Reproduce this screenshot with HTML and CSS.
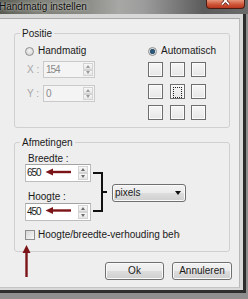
FILE: index.html
```html
<!DOCTYPE html>
<html lang="nl">
<head>
<meta charset="utf-8">
<title>Handmatig instellen</title>
<link rel="stylesheet" href="styles.css">
</head>
<body>
<div class="screen">
  <div class="titlebar">
    <span class="title">Handmatig instellen</span>
    <span class="close">
      <svg width="37" height="8" viewBox="0 0 37 8"><path d="M15 -3 L22 4.5 M22 -3 L15 4.5" stroke="#5a1a10" stroke-width="3.2"/><path d="M15 -3 L22 4.5 M22 -3 L15 4.5" stroke="#ffffff" stroke-width="1.8"/></svg>
    </span>
  </div>
  <div class="window">
    <div class="client">
      <fieldset class="group">
        <legend>Positie</legend>
        <div class="pos-body">
          <div class="pos-manual">
            <div class="radio"><span class="rb"></span><span>Handmatig</span></div>
            <div class="coord">
              <span class="coord-label">X :</span>
              <div class="spin spin-xy"><span class="spin-val">154</span><span class="spin-btns"><span class="sb up"></span><span class="sb down"></span></span></div>
            </div>
            <div class="coord">
              <span class="coord-label">Y :</span>
              <div class="spin spin-xy"><span class="spin-val">0</span><span class="spin-btns"><span class="sb up"></span><span class="sb down"></span></span></div>
            </div>
          </div>
          <div class="pos-auto">
            <div class="radio"><span class="rb rb-on"></span><span>Automatisch</span></div>
            <div class="anchors">
              <span></span><span></span><span></span>
              <span></span><span class="focus"></span><span></span>
              <span></span><span></span><span></span>
            </div>
          </div>
        </div>
      </fieldset>
      <fieldset class="group group-size">
        <legend>Afmetingen</legend>
        <div class="size-body">
          <div class="size-row">
            <div class="fields">
              <div class="field-label">Breedte :</div>
              <div class="spin spin-size"><span class="spin-val">650</span><span class="spin-btns"><span class="sb up"></span><span class="sb down"></span></span></div>
              <div class="field-label label-h">Hoogte :</div>
              <div class="spin spin-size spin-h"><span class="spin-val">450</span><span class="spin-btns"><span class="sb up"></span><span class="sb down"></span></span></div>
            </div>
            <svg class="bracket" width="15" height="42" viewBox="0 0 15 42"><path d="M0 2 H9 V40 H0 M9 21 H14" fill="none" stroke="#111" stroke-width="2"/></svg>
            <div class="combo"><span class="combo-text">pixels</span><span class="caret"></span></div>
          </div>
          <div class="check"><span class="cb"></span><span class="check-text">Hoogte/breedte-verhouding behouden</span></div>
        </div>
      </fieldset>
      <div class="buttons">
        <button class="btn btn-ok">Ok</button>
        <button class="btn btn-cancel">Annuleren</button>
      </div>
    </div>
  </div>
  <svg class="annotations" width="248" height="299" viewBox="0 0 248 299">
    <g fill="#7b1416" stroke="#7b1416">
      <line x1="52" y1="172" x2="71" y2="172" stroke-width="2.4"/>
      <polygon points="45.5,172 53,168.5 53,175.5" stroke="none"/>
      <line x1="52" y1="210.5" x2="71" y2="210.5" stroke-width="2.4"/>
      <polygon points="45.5,210.5 53,207 53,214" stroke="none"/>
      <line x1="26.5" y1="252" x2="26.5" y2="277" stroke-width="2.4"/>
      <polygon points="26.5,245 22.5,253 30.5,253" stroke="none"/>
    </g>
  </svg>
</div>
</body>
</html>
```

FILE: styles.css
```css
* { box-sizing: border-box; }
html, body { margin: 0; padding: 0; }
body {
  font-family: "Liberation Sans", Arial, sans-serif;
  font-size: 10px;
  line-height: 12px;
  color: #1a1a1a;
  background: #8f8f8f;
}
.screen {
  width: 248px;
  height: 299px;
  position: relative;
  overflow: hidden;
  display: flex;
  flex-direction: column;
  background: #8f8f8f;
}
.titlebar {
  height: 14px;
  flex: none;
  display: flex;
  align-items: flex-start;
  background: linear-gradient(to right, #55584e 0%, #7c7e76 14%, #8a8b85 34%, #a7a7a5 48%, #9c9c9c 58%, #777 72%, #5c5c5c 82%, #6c6c6c 100%);
}
.title {
  line-height: 14px;
  margin-left: -1px;
  color: #0f0f0f;
  white-space: nowrap;
  text-shadow: 0 0 4px #c9c9c1, 0 0 2px #b5b5ad;
}
.close {
  margin-left: auto;
  margin-right: 3px;
  width: 39px;
  height: 9px;
  border: 1px solid #4b1b12;
  border-top: 0;
  border-radius: 0 0 4px 4px;
  background: linear-gradient(#e7967c, #cf5538 55%, #b8361e);
}
.close svg { display: block; }
.window {
  width: 246px;
  height: 279px;
  flex: none;
  display: flex;
  flex-direction: column;
  padding: 4px 3px 2px 0;
  background: #d8d8d8;
  border-right: 3px solid #2d2d2d;
  border-bottom: 3px solid #2d2d2d;
}
.client {
  flex: 1;
  background: #eeeeee;
  border-top: 1px solid #a9a9a9;
  border-right: 1px solid #b9b9b9;
  border-bottom: 1px solid #c4c4c4;
}
.group {
  margin: 8px 0 0 14px;
  width: 216px;
  min-width: 0;
  padding: 0;
  border: 1px solid #d0d0d0;
  border-radius: 3px;
}
.group legend {
  margin-left: 5px;
  padding: 0 2px;
  line-height: 13px;
}
.pos-body {
  display: grid;
  grid-template-columns: 123px auto;
  padding: 5px 0 7px 10px;
}
.radio {
  display: flex;
  align-items: center;
  height: 12px;
}
.rb {
  width: 9px;
  height: 9px;
  margin-right: 4px;
  border-radius: 50%;
  border: 1px solid #8f8f8f;
  background: radial-gradient(circle at 50% 40%, #f4f4f4, #cdcdcd);
}
.rb-on {
  background: radial-gradient(circle, #2b5677 0, #2b5677 2.2px, #dcdcdc 3px, #e8e8e8);
}
.coord {
  display: flex;
  align-items: center;
  margin-top: 4px;
}
.coord + .coord { margin-top: 7px; }
.coord-label {
  width: 18px;
  padding-left: 2px;
  color: #a6a6a6;
}
.spin {
  display: flex;
  align-items: center;
  background: #fff;
  border: 1px solid #bdbdbd;
  border-top-color: #a3a3a3;
}
.spin-xy {
  width: 52px;
  height: 17px;
  background: #f4f4f4;
  border-color: #cacaca;
  color: #8a8a8a;
}
.spin-size {
  width: 66px;
  height: 18px;
}
.spin-h { margin-top: 1px; }
.spin-val {
  flex: 1;
  padding-left: 2px;
  letter-spacing: -1px;
}
.spin-size .spin-val { padding-left: 1px; }
.spin-btns {
  display: flex;
  flex-direction: column;
  width: 10px;
  height: calc(100% - 2px);
  margin-right: 1px;
}
.spin-size .spin-btns { margin-right: 2px; }
.sb {
  flex: 1;
  display: flex;
  align-items: center;
  justify-content: center;
  border: 1px solid #d3d3d3;
  background: linear-gradient(#f8f8f8, #e5e5e5);
}
.sb::after {
  content: "";
  border-left: 2.5px solid transparent;
  border-right: 2.5px solid transparent;
  border-bottom: 3px solid #6c6c6c;
}
.sb.down::after {
  border-bottom: 0;
  border-top: 3px solid #6c6c6c;
}
.spin-xy .sb::after { border-bottom-color: #9a9a9a; }
.spin-xy .sb.down::after { border-top-color: #9a9a9a; }
.anchors {
  display: grid;
  grid-template-columns: repeat(3, 15px);
  grid-auto-rows: 15px;
  gap: 6.5px;
  margin-top: 5px;
}
.anchors span {
  border: 1px solid #6e6e6e;
  background: linear-gradient(#f6f6f6, #e6e6e6);
  box-shadow: inset 0 0 0 1px #fbfbfb;
}
.anchors .focus::after {
  content: "";
  display: block;
  margin: 2px;
  height: 9px;
  border: 1px dotted #222;
}
.size-body {
  padding: 4px 0 10px 10px;
}
.size-row {
  display: flex;
  align-items: flex-start;
}
.fields { width: 66px; flex: none; }
.field-label {
  line-height: 11px;
  padding-left: 3px;
}
.label-h { margin-top: 9px; }
.bracket {
  display: block;
  flex: none;
  margin: 18px 0 0 2px;
}
.combo {
  display: flex;
  align-items: center;
  justify-content: space-between;
  width: 74px;
  height: 18px;
  margin: 31px 0 0 4px;
  padding: 0 4px 0 2px;
  border: 1px solid #707070;
  border-radius: 3px;
  background: linear-gradient(#f2f2f2 0%, #ebebeb 50%, #dddddd 50%, #cfcfcf 100%);
  box-shadow: inset 0 0 0 1px #fafafa;
}
.caret {
  border-left: 3.5px solid transparent;
  border-right: 3.5px solid transparent;
  border-top: 4px solid #111;
}
.check {
  display: flex;
  align-items: center;
  height: 12px;
  margin-top: 8px;
}
.cb {
  width: 10px;
  height: 10px;
  margin-right: 3px;
  border: 1px solid #8e8e8e;
  background: linear-gradient(135deg, #d6d6d6, #f8f8f8);
}
.check-text {
  width: 142px;
  overflow: hidden;
  white-space: nowrap;
}
.buttons {
  display: flex;
  justify-content: flex-end;
  gap: 8px;
  margin-top: 10px;
  padding-right: 7px;
}
.btn {
  height: 18px;
  padding: 0;
  font: inherit;
  line-height: 12px;
  color: #1a1a1a;
  border: 1px solid #707070;
  border-radius: 3px;
  background: linear-gradient(#f2f2f2 0%, #ebebeb 50%, #dddddd 50%, #cfcfcf 100%);
  box-shadow: inset 0 0 0 1px #fafafa;
}
.btn-ok { width: 59px; }
.btn-cancel { width: 60px; }
.annotations {
  position: absolute;
  left: 0;
  top: 0;
  pointer-events: none;
}
```
